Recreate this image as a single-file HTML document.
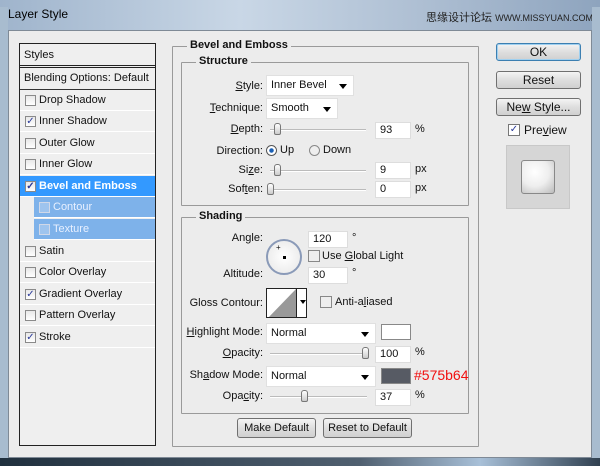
<!DOCTYPE html>
<html><head><style>
*{margin:0;padding:0;box-sizing:border-box}
body{width:600px;height:466px;overflow:hidden;font-family:"Liberation Sans",sans-serif;font-size:11px;color:#111;position:relative;background:#b9c9da;white-space:nowrap}
.a{position:absolute}
.title{left:0;top:0;width:600px;height:30px;background:linear-gradient(90deg,#9fb4cc,#c9d7e6 40%,#aebfd3 70%,#8ea4be)}
.client{left:8px;top:30px;width:584px;height:428px;background:#ececec;border:1px solid #7f8a96}
.list{left:19px;top:43px;width:137px;height:403px;border:1px solid #222;background:#efefef}
.row{position:absolute;left:0;width:135px;height:21px;border-bottom:1px solid #fff;line-height:21px;padding-left:19px;font-size:11px}
.cb{position:absolute;width:11px;height:11px;border:1px solid #8a8a8a;background:linear-gradient(#e8e8e8,#fff);top:5px;left:5px;font-size:10px;line-height:9px;text-align:center;color:#2a3a9a}
.fs{border:1px solid #9a9a9a;border-radius:1px}
.lg{background:#ececec;font-weight:bold;font-size:11px;padding:0 3px}
.lbl{text-align:right;width:80px;font-size:11px}
.inp{background:#fff;border:1px solid #ddd;font-size:11px;padding-left:4px;line-height:15px;height:17px}
.sel{background:#fff;border:1px solid #e0e0e0;font-size:11px;padding-left:4px;line-height:19px;height:21px}
.sel:after{content:"";position:absolute;right:6px;top:8px;border:4px solid transparent;border-top:5px solid #000}
.sl{height:2px;background:#bbb;border-bottom:1px solid #fff}
.th{width:7px;height:12px;border:1px solid #777;border-radius:3px 3px 2px 2px;background:linear-gradient(#fff,#ccc)}
.btn{border:1px solid #707070;border-radius:3px;background:linear-gradient(#f4f4f4,#dedede 50%,#d0d0d0);text-align:center;font-size:12px;line-height:16px}
u{text-decoration:underline}
</style></head><body>
<div class="a title"></div>
<div class="a" style="left:8px;top:7px;font-size:12px;color:#000">Layer Style</div>
<div class="a" style="left:426px;top:9px;font-size:11px;color:#222;font-family:'Liberation Sans','Noto Sans CJK SC',sans-serif">思缘设计论坛 <span style="font-size:9px">WWW.MISSYUAN.COM</span></div>
<div class="a" style="left:0;top:7px;width:8px;height:451px;background:#a8bccf"></div>
<div class="a" style="left:592px;top:7px;width:8px;height:451px;background:#a8bccf"></div>
<div class="a client"></div>
<div class="a" style="left:0;top:458px;width:600px;height:8px;background:linear-gradient(90deg,#20303e,#506070 60%,#a8c0d8 80%,#304050)"></div>

<div class="a list">
 <div class="row" style="top:0;height:24px;line-height:22px;padding-left:4px;border-bottom:3px double #222">Styles</div>
 <div class="row" style="top:24px;height:22px;padding-left:4px;border-bottom:1px solid #333">Blending Options: Default</div>
 <div class="row" style="top:46px"><span class="cb"></span>Drop Shadow</div>
 <div class="row" style="top:67px"><span class="cb">✓</span>Inner Shadow</div>
 <div class="row" style="top:89px"><span class="cb"></span>Outer Glow</div>
 <div class="row" style="top:110px"><span class="cb"></span>Inner Glow</div>
 <div class="row" style="top:132px;background:#3399ff;color:#fff;font-weight:bold"><span class="cb">✓</span>Bevel and Emboss</div>
 <div class="row" style="top:153px;left:14px;width:121px;background:#7eb2ea;color:#e8f0ff"><span class="cb" style="border-color:#d0d8e8;background:#9ec4ee"></span>Contour</div>
 <div class="row" style="top:175px;left:14px;width:121px;background:#7eb2ea;color:#e8f0ff"><span class="cb" style="border-color:#d0d8e8;background:#9ec4ee"></span>Texture</div>
 <div class="row" style="top:197px"><span class="cb"></span>Satin</div>
 <div class="row" style="top:218px"><span class="cb"></span>Color Overlay</div>
 <div class="row" style="top:240px"><span class="cb">✓</span>Gradient Overlay</div>
 <div class="row" style="top:261px"><span class="cb"></span>Pattern Overlay</div>
 <div class="row" style="top:283px"><span class="cb">✓</span>Stroke</div>
</div>

<div class="a fs" style="left:172px;top:46px;width:307px;height:401px"></div>
<div class="a lg" style="left:187px;top:39px">Bevel and Emboss</div>
<div class="a fs" style="left:181px;top:62px;width:288px;height:144px"></div>
<div class="a lg" style="left:196px;top:55px">Structure</div>

<div class="a lbl" style="left:183px;top:80px"><u>S</u>tyle:</div>
<div class="a sel" style="left:266px;top:75px;width:88px">Inner Bevel</div>
<div class="a lbl" style="left:183px;top:102px"><u>T</u>echnique:</div>
<div class="a sel" style="left:266px;top:98px;width:72px">Smooth</div>
<div class="a lbl" style="left:183px;top:123px"><u>D</u>epth:</div>
<div class="a sl" style="left:270px;top:129px;width:96px"></div><div class="a th" style="left:274px;top:123px"></div>
<div class="a inp" style="left:375px;top:122px;width:36px">93</div><div class="a" style="left:415px;top:123px">%</div>
<div class="a lbl" style="left:183px;top:145px">Direction:</div>
<div class="a" style="left:266px;top:145px;width:11px;height:11px;border-radius:50%;border:1px solid #555;background:radial-gradient(#1a5fb4 30%,#fff 40%)"></div><div class="a" style="left:280px;top:144px">Up</div>
<div class="a" style="left:309px;top:145px;width:11px;height:11px;border-radius:50%;border:1px solid #888;background:#eee"></div><div class="a" style="left:323px;top:144px">Down</div>
<div class="a lbl" style="left:183px;top:164px">Si<u>z</u>e:</div>
<div class="a sl" style="left:270px;top:170px;width:96px"></div><div class="a th" style="left:274px;top:164px"></div>
<div class="a inp" style="left:375px;top:162px;width:36px">9</div><div class="a" style="left:415px;top:163px">px</div>
<div class="a lbl" style="left:183px;top:183px">Sof<u>t</u>en:</div>
<div class="a sl" style="left:270px;top:189px;width:96px"></div><div class="a th" style="left:267px;top:183px"></div>
<div class="a inp" style="left:375px;top:181px;width:36px">0</div><div class="a" style="left:415px;top:182px">px</div>

<div class="a fs" style="left:181px;top:217px;width:288px;height:197px"></div>
<div class="a lg" style="left:196px;top:210px">Shading</div>
<div class="a lbl" style="left:183px;top:232px">An<u>g</u>le:</div>
<div class="a" style="left:266px;top:239px;width:36px;height:36px;border-radius:50%;border:2px solid #8a9ab8;background:radial-gradient(#fff,#e6e6e6)"></div>
<div class="a" style="left:283px;top:256px;width:3px;height:3px;background:#000"></div>
<div class="a" style="left:276px;top:243px;font-size:8px">+</div>
<div class="a inp" style="left:308px;top:231px;width:40px">120</div><div class="a" style="left:352px;top:232px">°</div>
<div class="a" style="left:308px;top:250px;width:12px;height:12px;border:1px solid #888;background:#eee"></div>
<div class="a" style="left:322px;top:250px">Use <u>G</u>lobal Light</div>
<div class="a lbl" style="left:183px;top:268px">Altitude:</div>
<div class="a inp" style="left:308px;top:267px;width:40px">30</div><div class="a" style="left:352px;top:267px">°</div>
<div class="a lbl" style="left:183px;top:297px">Gloss Contour:</div>
<div class="a" style="left:266px;top:288px;width:41px;height:30px;border:1px solid #222;background:#fff;overflow:hidden"><svg width="41" height="30"><polygon points="0,30 29,0 29,30" fill="#999"/><rect x="29" y="0" width="1" height="30" fill="#222"/><polygon points="33,11 39,11 36,15" fill="#000"/></svg></div>
<div class="a" style="left:320px;top:296px;width:12px;height:12px;border:1px solid #888;background:#eee"></div>
<div class="a" style="left:335px;top:296px">Anti-a<u>l</u>iased</div>
<div class="a lbl" style="left:183px;top:326px"><u>H</u>ighlight Mode:</div>
<div class="a sel" style="left:266px;top:323px;width:110px">Normal</div>
<div class="a" style="left:381px;top:324px;width:30px;height:16px;border:1px solid #888;background:#fff"></div>
<div class="a lbl" style="left:183px;top:347px"><u>O</u>pacity:</div>
<div class="a sl" style="left:270px;top:353px;width:97px"></div><div class="a th" style="left:362px;top:347px"></div>
<div class="a inp" style="left:375px;top:346px;width:36px">100</div><div class="a" style="left:415px;top:346px">%</div>
<div class="a lbl" style="left:183px;top:369px">Sh<u>a</u>dow Mode:</div>
<div class="a sel" style="left:266px;top:366px;width:110px">Normal</div>
<div class="a" style="left:381px;top:368px;width:30px;height:16px;border:1px solid #888;background:#575b64"></div>
<div class="a" style="left:414px;top:367px;color:#f01010;font-size:14px">#575b64</div>
<div class="a lbl" style="left:183px;top:390px">Opa<u>c</u>ity:</div>
<div class="a sl" style="left:270px;top:396px;width:97px"></div><div class="a th" style="left:301px;top:390px"></div>
<div class="a inp" style="left:375px;top:389px;width:36px">37</div><div class="a" style="left:415px;top:389px">%</div>

<div class="a btn" style="left:237px;top:418px;width:79px;height:20px;line-height:18px;font-size:11px">Make Default</div>
<div class="a btn" style="left:323px;top:418px;width:89px;height:20px;line-height:18px;font-size:11px">Reset to Default</div>

<div class="a btn" style="left:496px;top:43px;width:85px;height:18px;border-color:#3c7fb1;box-shadow:0 0 0 1px #9fd0f0 inset">OK</div>
<div class="a btn" style="left:496px;top:71px;width:85px;height:18px">Reset</div>
<div class="a btn" style="left:496px;top:98px;width:85px;height:18px">Ne<u>w</u> Style...</div>
<div class="a" style="left:508px;top:124px;width:12px;height:12px;border:1px solid #777;background:#fff;font-size:10px;line-height:10px;text-align:center;color:#2a3a9a">✓</div>
<div class="a" style="left:524px;top:123px;font-size:12px">Pre<u>v</u>iew</div>
<div class="a" style="left:506px;top:145px;width:64px;height:64px;background:#d6d6d6;border:1px solid #c8c8c8"></div>
<div class="a" style="left:521px;top:160px;width:34px;height:34px;border:1px solid #888;border-radius:3px;background:radial-gradient(circle at 40% 35%,#fff,#eee 50%,#bbb)"></div>
</body></html>
